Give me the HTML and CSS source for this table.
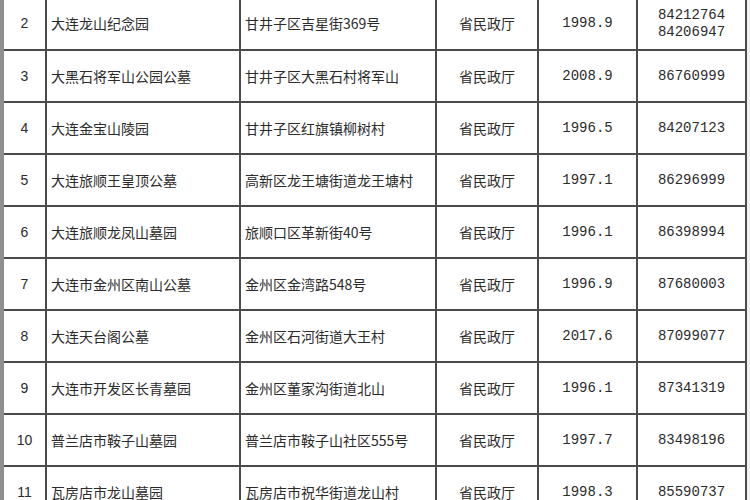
FILE: index.html
```html
<!DOCTYPE html>
<html lang="zh-CN">
<head>
<meta charset="utf-8">
<title>墓园列表</title>
<link rel="stylesheet" href="styles.css">
</head>
<body>
<table class="list">
  <colgroup>
    <col class="c-no">
    <col class="c-name">
    <col class="c-addr">
    <col class="c-dept">
    <col class="c-date">
    <col class="c-tel">
  </colgroup>
  <tbody>
    <tr class="first"><td class="no">2</td><td class="txt">大连龙山纪念园</td><td class="txt">甘井子区吉星街369号</td><td class="mid">省民政厅</td><td class="num">1998.9</td><td class="num tel2">84212764<br>84206947</td></tr>
    <tr><td class="no">3</td><td class="txt">大黑石将军山公园公墓</td><td class="txt">甘井子区大黑石村将军山</td><td class="mid">省民政厅</td><td class="num">2008.9</td><td class="num">86760999</td></tr>
    <tr><td class="no">4</td><td class="txt">大连金宝山陵园</td><td class="txt">甘井子区红旗镇柳树村</td><td class="mid">省民政厅</td><td class="num">1996.5</td><td class="num">84207123</td></tr>
    <tr><td class="no">5</td><td class="txt">大连旅顺王皇顶公墓</td><td class="txt">高新区龙王塘街道龙王塘村</td><td class="mid">省民政厅</td><td class="num">1997.1</td><td class="num">86296999</td></tr>
    <tr><td class="no">6</td><td class="txt">大连旅顺龙凤山墓园</td><td class="txt">旅顺口区革新街40号</td><td class="mid">省民政厅</td><td class="num">1996.1</td><td class="num">86398994</td></tr>
    <tr><td class="no">7</td><td class="txt">大连市金州区南山公墓</td><td class="txt">金州区金湾路548号</td><td class="mid">省民政厅</td><td class="num">1996.9</td><td class="num">87680003</td></tr>
    <tr><td class="no">8</td><td class="txt">大连天台阁公墓</td><td class="txt">金州区石河街道大王村</td><td class="mid">省民政厅</td><td class="num">2017.6</td><td class="num">87099077</td></tr>
    <tr><td class="no">9</td><td class="txt">大连市开发区长青墓园</td><td class="txt">金州区董家沟街道北山</td><td class="mid">省民政厅</td><td class="num">1996.1</td><td class="num">87341319</td></tr>
    <tr><td class="no">10</td><td class="txt">普兰店市鞍子山墓园</td><td class="txt">普兰店市鞍子山社区555号</td><td class="mid">省民政厅</td><td class="num">1997.7</td><td class="num">83498196</td></tr>
    <tr><td class="no">11</td><td class="txt">瓦房店市龙山墓园</td><td class="txt">瓦房店市祝华街道龙山村</td><td class="mid">省民政厅</td><td class="num">1998.3</td><td class="num">85590737</td></tr>
  </tbody>
</table>
</body>
</html>
```
FILE: styles.css
```css
html, body {
  margin: 0;
  padding: 0;
  overflow: hidden;
  background: #f2f2f2;
}
body {
  font-family: "Noto Sans CJK SC", "Noto Sans", sans-serif;
  color: #2b2b2b;
}
.list {
  border-collapse: collapse;
  table-layout: fixed;
  width: 747px;
  margin-top: -2px;
  background: #fff;
  border-left: 4px solid #8e8e8e;
  border-top: 0;
}
.c-no { width: 44px; }
.c-name { width: 194px; }
.c-addr { width: 196px; }
.c-dept { width: 102px; }
.c-date { width: 99px; }
.c-tel { width: 109px; }
.list tr { height: 52px; }
.list td {
  border: 2px solid #4a4a4a;
  padding: 0 4px;
  font-size: 14px;
  line-height: 17px;
  vertical-align: middle;
  white-space: nowrap;
  overflow: hidden;
}
.list tr.first td { border-top: 0; }
.list td:first-child { border-left: 4px solid #8e8e8e; }
.no {
  text-align: center;
  font-family: "Liberation Sans", "DejaVu Sans", sans-serif;
  font-size: 13px;
}
.txt { text-align: left; }
.mid { text-align: center; }
.num {
  text-align: center;
  font-family: "Liberation Mono", "DejaVu Sans Mono", monospace;
  font-size: 12.5px;
  letter-spacing: 0;
}
```
